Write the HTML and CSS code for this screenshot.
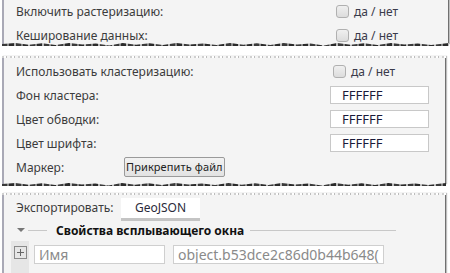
FILE: index.html
```html
<!DOCTYPE html>
<html lang="ru">
<head>
<meta charset="utf-8">
<link rel="stylesheet" href="styles.css">
</head>
<body>
<div class="panel p1">
  <div class="row"><span class="label">Включить растеризацию:</span><label class="check"><span class="box"></span>да / нет</label></div>
  <div class="row"><span class="label">Кеширование данных:</span><label class="check"><span class="box"></span>да / нет</label></div>
  <div class="tear-bottom"></div>
</div>
<div class="panel p2">
  <div class="tear-top"></div>
  <div class="row"><span class="label">Использовать кластеризацию:</span><label class="check"><span class="box"></span>да / нет</label></div>
  <div class="row"><span class="label">Фон кластера:</span><span class="field">FFFFFF</span></div>
  <div class="row"><span class="label">Цвет обводки:</span><span class="field">FFFFFF</span></div>
  <div class="row"><span class="label">Цвет шрифта:</span><span class="field">FFFFFF</span></div>
  <div class="row"><span class="label short">Маркер:</span><span class="btn">Прикрепить файл</span></div>
  <div class="tear-bottom"></div>
</div>
<div class="panel p3">
  <div class="tear-top"></div>
  <div class="row export"><span class="label export-label">Экспортировать:</span><span class="btn-geo">GeoJSON</span></div>
  <div class="legend"><span class="tri"></span><span class="rule short-rule"></span><span class="legend-text">Свойства всплывающего окна</span><span class="rule long-rule"></span></div>
  <div class="props">
    <div class="addcol"><span class="plus"></span></div>
    <span class="input name">Имя</span>
    <span class="input value">object.b53dce2c86d0b44b648(</span>
  </div>
</div>
</body>
</html>
```
FILE: styles.css
```css
html, body {
  margin: 0;
  padding: 0;
  background: #ffffff;
  width: 450px;
  height: 273px;
  overflow: hidden;
  font-family: "Noto Sans", "Open Sans", sans-serif;
  font-size: 12px;
  color: #3c3c3c;
}
.panel {
  position: relative;
  margin-left: 2px;
  width: 444px;
  background: #f4f4f4;
  border-left: 2px solid #a9a9b6;
  border-right: 1px solid #707070;
  box-shadow: 1px 0 1px rgba(0,0,0,0.25);
}
.p1 { height: 44px; }
.p2 { margin-top: 12px; height: 128px; padding-top: 3px; box-sizing: border-box; }
.p3 { margin-top: 9px; height: 80px; padding-top: 2px; box-sizing: border-box; }
.row {
  display: flex;
  align-items: center;
  height: 23.5px;
  padding-left: 12px;
  padding-right: 16px;
}
.p2 .row { height: 24px; }
.label { flex: 1; white-space: nowrap; }
.label.short { flex: none; width: 108px; }
.check {
  display: flex;
  align-items: center;
  width: 96px;
  color: #3a3a4a;
  font-size: 12px;
  padding-left: 1px;
}
.box {
  width: 11px;
  height: 11px;
  border: 1px solid #b0b0b0;
  border-radius: 3px;
  background: linear-gradient(#f0f0f0, #dcdcdc);
  margin-right: 5px;
}
.field {
  width: 86px;
  height: 16px;
  border: 1px solid #c8c8c8;
  background: #fff;
  padding-left: 11px;
  font-size: 13px;
  line-height: 16px;
  color: #1a1a3a;
}
.btn {
  height: 20px;
  line-height: 18px;
  box-sizing: border-box;
  padding: 0 1px;
  border: 1px solid #9a9a9a;
  border-radius: 2px;
  background: linear-gradient(#f2f2f2, #e2e2e2);
  color: #222;
  font-size: 11px;
  letter-spacing: 0.1px;
}
.export { height: 24px; }
.export-label { flex: none; width: 105px; padding-top: 0; }
.btn-geo {
  width: 79px;
  height: 23px;
  box-sizing: border-box;
  background: #fff;
  border-bottom: 3px solid #c4c4c4;
  text-align: center;
  line-height: 19px;
  color: #2a2a3a;
  margin-top: 4px;
}
.legend {
  display: flex;
  align-items: center;
  height: 22px;
  padding-left: 13px;
}
.tri {
  width: 0;
  height: 0;
  border-left: 4px solid transparent;
  border-right: 4px solid transparent;
  border-top: 4px solid #777;
}
.rule { height: 1px; background: #c8c8c8; }
.short-rule { width: 19px; margin-left: 3px; margin-right: 9px; }
.long-rule { width: 146px; margin-left: 6px; }
.legend-text { font-weight: bold; color: #111; font-size: 12px; }
.props {
  display: flex;
  align-items: flex-start;
  padding-left: 7px;
}
.addcol {
  width: 18px;
  height: 40px;
  background: #e6e6e6;
  display: flex;
  justify-content: center;
  padding-top: 5px;
  box-sizing: border-box;
  margin-right: 5px;
}
.plus {
  position: relative;
  width: 11px;
  height: 11px;
  border: 1px solid #8a8a8a;
  box-sizing: content-box;
}
.plus::before, .plus::after {
  content: "";
  position: absolute;
  background: #666;
}
.plus::before { left: 2px; right: 2px; top: 5px; height: 1px; }
.plus::after { top: 2px; bottom: 2px; left: 5px; width: 1px; }
.input {
  height: 17px;
  border: 1px solid #cfcfcf;
  background: #fff;
  color: #8a8a8a;
  font-size: 14px;
  line-height: 17px;
  padding-left: 4px;
  margin-top: 4px;
  white-space: nowrap;
  overflow: hidden;
}
.name { width: 125px; margin-right: 8px; }
.value { width: 205px; }
.tear-bottom {
  position: absolute;
  left: -2px;
  right: -1px;
  bottom: -2px;
  height: 3px;
  background:
    repeating-linear-gradient(90deg, #3a3a3a 0 5px, #8a8a8a 5px 7px, #2a2a2a 7px 12px, #bbbbbb 12px 14px);
  clip-path: polygon(0 30%, 3% 0, 6% 60%, 9% 10%, 12% 70%, 15% 0, 18% 50%, 21% 20%, 24% 80%, 27% 0, 30% 60%, 33% 10%, 36% 70%, 39% 0, 42% 50%, 45% 20%, 48% 70%, 51% 0, 54% 60%, 57% 10%, 60% 70%, 63% 0, 66% 50%, 69% 20%, 72% 80%, 75% 0, 78% 60%, 81% 10%, 84% 70%, 87% 0, 90% 50%, 93% 20%, 96% 70%, 100% 0, 100% 100%, 0 100%);
}
.tear-top {
  position: absolute;
  left: -2px;
  right: -1px;
  top: 0;
  height: 2px;
  background: repeating-linear-gradient(90deg, #d0d0d0 0 2px, #ffffff 2px 4px, #bcbcbc 4px 5px, #f4f4f4 5px 8px);
}
```
